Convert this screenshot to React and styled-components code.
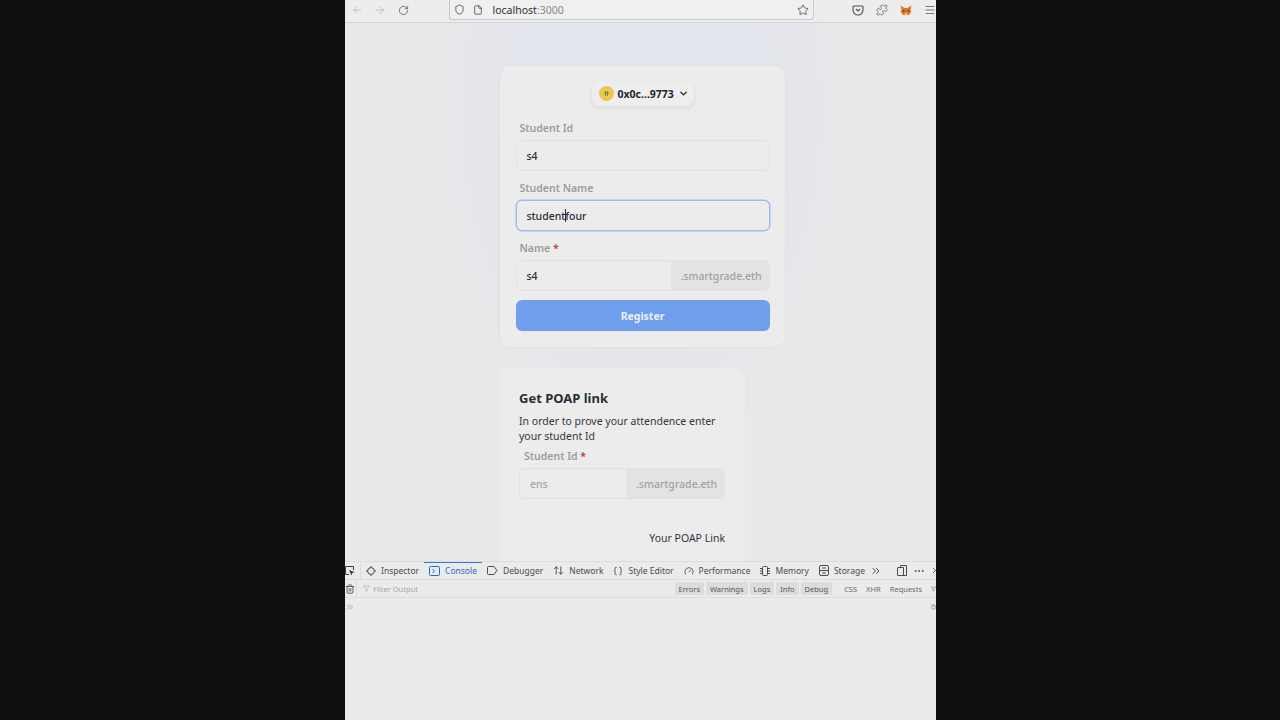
import React from 'react';
import styled, { createGlobalStyle } from 'styled-components';
import {
  ArrowLeft, ArrowRight, RotateCw, Shield, File, Star, Puzzle, Menu, ChevronDown,
  ArrowUpDown, Braces, Gauge, ChevronsRight, Ellipsis, X, Trash2, Filter,
} from 'lucide-react';

const GlobalStyle = createGlobalStyle`
  html, body { margin: 0; height: 100%; background: #0f0f0f; }
  body { font-family: "Noto Sans", "Open Sans", sans-serif; overflow: hidden; }
  * { box-sizing: border-box; }
`;

const Stage = styled.div`
  height: 720px;
  padding-left: 345px;
`;

const Win = styled.div`
  width: 591px;
  height: 720px;
  background: #ebebeb;
  display: flex;
  flex-direction: column;
  overflow: hidden;
`;

const Toolbar = styled.div`
  height: 23px;
  flex: none;
  background: #ededed;
  border-bottom: 1px solid #d4d4d4;
  display: flex;
  align-items: flex-start;
  color: #4a4a4a;
`;

const NavIcon = styled.span`
  width: 23.5px;
  height: 20px;
  display: flex;
  align-items: center;
  justify-content: center;
  color: ${p => (p.$dim ? '#b4b4b4' : '#4d4d4d')};
`;

const NavGroup = styled.div`
  display: flex;
  padding-left: ${p => p.$left || 0}px;
  gap: ${p => p.$gap || 0}px;
  align-items: center;
  height: 20px;
`;

const UrlBar = styled.div`
  width: 371px;
  height: 20px;
  margin-left: 33px;
  background: #f0f0f0;
  border: 1px solid #c9c9c9;
  border-top: none;
  border-radius: 0 0 3px 3px;
  display: flex;
  align-items: center;
  padding: 0 4px 0 4px;
  gap: 8px;
  font-size: 10.5px;
  color: #2f2f2f;
`;

const UrlText = styled.span`
  flex: 1;
  padding-left: 2px;
  span { color: #8a8a8a; }
`;

const Page = styled.div`
  height: 538px;
  flex: none;
  padding: 42px 0 0 154px;
  overflow: hidden;
  background:
    radial-gradient(ellipse 230px 360px at 297px 90px, #e2e5ee 0%, #e3e5ec 55%, rgba(233, 233, 233, 0) 100%),
    #e9e9e9;
`;

const Card = styled.div`
  width: 287px;
  padding: 15px 15.5px 16px;
  background: #ececec;
  border: 1px solid #e2e2e2;
  border-radius: 12px;
  display: flex;
  flex-direction: column;
`;

const WalletRow = styled.div`
  display: flex;
  justify-content: center;
  margin-bottom: 15px;
`;

const WalletButton = styled.div`
  width: 102px;
  height: 25px;
  border-radius: 8px;
  background: #eeeeee;
  box-shadow: 0 2px 5px rgba(0, 0, 0, 0.08);
  display: flex;
  align-items: center;
  padding-left: 7px;
  gap: 4px;
  font-size: 10.5px;
  font-weight: 700;
  color: #22252b;
  white-space: nowrap;
`;

const Avatar = styled.span`
  width: 15px;
  height: 15px;
  border-radius: 50%;
  background: #edc84f;
  display: flex;
  align-items: center;
  justify-content: center;
  flex: none;
`;

const Label = styled.div`
  font-size: 10.5px;
  font-weight: 600;
  line-height: 14px;
  color: #9a9ca1;
  padding-left: ${p => p.$indent || 4}px;
  margin-bottom: 5px;
  i { font-style: normal; color: #c0392b; }
`;

const InputBox = styled.div`
  height: 31px;
  display: flex;
  align-items: center;
  border: 1px solid ${p => (p.$focused ? '#9dbbec' : '#e2e2e2')};
  box-shadow: ${p => (p.$focused ? '0 0 0 0.5px #9dbbec' : 'none')};
  border-radius: 6px;
  padding-left: 10px;
  margin-bottom: ${p => p.$gap ?? 10}px;
  font-size: 10.5px;
  font-weight: 500;
  color: #2b2d33;
  background: #ececec;
  overflow: hidden;
`;

const Caret = styled.span`
  display: inline-block;
  width: 1px;
  height: 13px;
  margin: 0 -1px 0 0;
  background: #2b2d33;
  vertical-align: -2px;
`;

const GroupValue = styled.span`
  flex: 1;
  color: ${p => (p.$placeholder ? '#a3a5aa' : '#2b2d33')};
`;

const Addon = styled.span`
  width: ${p => p.$width || 98}px;
  height: 100%;
  background: #e3e3e3;
  color: #a0a2a7;
  display: flex;
  align-items: center;
  padding-left: 10px;
  white-space: nowrap;
`;

const SubmitButton = styled.div`
  height: 31px;
  border-radius: 6px;
  background: #6f9fec;
  color: #ecf0f6;
  font-size: 10.5px;
  font-weight: 700;
  display: flex;
  align-items: center;
  justify-content: center;
`;

const PoapCard = styled.div`
  width: 246px;
  height: 300px;
  margin-top: 20px;
  padding: 20px;
  background: #ececec;
  border-radius: 12px;
  display: flex;
  flex-direction: column;
`;

const PoapTitle = styled.h2`
  margin: 0 0 6px;
  font-size: 13px;
  line-height: 20px;
  font-weight: 700;
  color: #2a2d35;
`;

const PoapText = styled.p`
  margin: 0 0 5px;
  font-size: 10.5px;
  line-height: 15px;
  color: #33363d;
`;

const PoapResult = styled.div`
  margin-top: 32px;
  text-align: right;
  font-size: 10.5px;
  line-height: 15px;
  color: #33363d;
`;

const Devtools = styled.div`
  flex: 1;
  background: #ebebeb;
  display: flex;
  flex-direction: column;
  font-size: 8.5px;
  color: #4a4a4f;
`;

const TabBar = styled.div`
  height: 19px;
  border-top: 1px solid #dcdcdc;
  border-bottom: 1px solid #dcdcdc;
  display: flex;
  align-items: center;
  white-space: nowrap;
`;

const Tab = styled.div`
  height: 100%;
  display: flex;
  align-items: center;
  gap: 5px;
  padding: 0 5px;
  margin-right: ${p => p.$after ?? 0}px;
  color: ${p => (p.$active ? '#2b6cc4' : '#4a4a4f')};
  box-shadow: ${p => (p.$active ? 'inset 0 1px 0 #2b7de0' : 'none')};
`;

const TabEnd = styled.div`
  margin-left: auto;
  display: flex;
  align-items: center;
  gap: 6px;
  margin-right: -4px;
`;

const PickerCell = styled.div`
  width: 16px;
  height: 100%;
  display: flex;
  align-items: center;
  border-right: 1px solid #dcdcdc;
`;

const FilterBar = styled.div`
  height: 18px;
  border-bottom: 1px solid #dcdcdc;
  display: flex;
  align-items: center;
  font-size: 7.5px;
`;

const FilterInput = styled.div`
  flex: 1;
  display: flex;
  align-items: center;
  gap: 3px;
  padding-left: 6px;
  color: #a5a5a5;
  height: 100%;
  border-left: 1px solid #dcdcdc;
  margin-left: 1px;
`;

const Pill = styled.span`
  height: 13px;
  padding: 0 4px;
  border-radius: 2px;
  background: #dcdcdc;
  margin-right: 2px;
  display: flex;
  align-items: center;
  color: #55565a;
`;

const PlainFilter = styled.span`
  margin-left: ${p => p.$left || 0}px;
  color: #6a6a6a;
`;

const Prompt = styled.div`
  height: 17px;
  display: flex;
  align-items: center;
  justify-content: space-between;
  color: #9a9a9a;
  padding-right: 0;
`;

const BottomIcon = styled.span`
  display: flex;
  width: 5px;
  overflow: hidden;
  color: #555;
`;

const Pocket = () => (
  <svg width="12" height="12" viewBox="0 0 12 12" fill="none" stroke="#4d4d4d" strokeWidth="1.1">
    <path d="M2 2h8a1 1 0 0 1 1 1v3a5 5 0 0 1-10 0V3a1 1 0 0 1 1-1z" />
    <path d="M4 5l2 2 2-2" />
  </svg>
);

const Fox = () => (
  <svg width="12" height="11" viewBox="0 0 12 11">
    <path d="M0.5 0.5l4 2.5h3l4-2.5-1 4 .8 2.5-2.3 3H3L.7 7l.8-2.5z" fill="#e2761b" />
    <path d="M3 4.5l2 1.5-2 .8zM9 4.5L7 6l2 .8z" fill="#5c3b1e" />
    <path d="M4.5 8h3l-.5 2H5z" fill="#d7c1b3" />
  </svg>
);

const InspectorIcon = () => (
  <svg width="10" height="10" viewBox="0 0 10 10" fill="none" stroke="#4a4a4f" strokeWidth="1">
    <circle cx="5" cy="5" r="3.4" />
    <path d="M5 0v1.6M5 8.4V10M0 5h1.6M8.4 5H10" />
  </svg>
);

const ConsoleIcon = () => (
  <svg width="11" height="10" viewBox="0 0 11 10" fill="none" stroke="#2b6cc4" strokeWidth="1">
    <rect x="0.5" y="0.5" width="10" height="9" rx="1" />
    <path d="M3.5 3l2 2-2 2" />
  </svg>
);

const DebuggerIcon = () => (
  <svg width="11" height="9" viewBox="0 0 11 9" fill="none" stroke="#4a4a4f" strokeWidth="1">
    <path d="M1.5.5h5.5l3 4-3 4H1.500a1 1 0 0 1-1-1v-6a1 1 0 0 1 1-1z" />
  </svg>
);

const MemoryIcon = () => (
  <svg width="10" height="10" viewBox="0 0 10 10" fill="none" stroke="#4a4a4f" strokeWidth="1">
    <rect x="2.500" y="0.500" width="5" height="9" rx="1" />
    <path d="M0 2.500h2M0 5h2M0 7.500h2M8 2.500h2M8 5h2M8 7.500h2" />
  </svg>
);

const StorageIcon = () => (
  <svg width="10" height="11" viewBox="0 0 10 11" fill="none" stroke="#4a4a4f" strokeWidth="1">
    <rect x="0.500" y="0.500" width="9" height="10" rx="1.500" />
    <path d="M0.500 5.500h9M3 3h4M3 8h4" />
  </svg>
);

const DockIcon = () => (
  <svg width="10" height="11" viewBox="0 0 10 11" fill="none" stroke="#4a4a4f" strokeWidth="1">
    <path d="M3.500 2.500V1a.5.5 0 0 1 .5-.5h5.500v10H1a.5.5 0 0 1-.5-.5V3a.5.5 0 0 1 .5-.5h5.500v8" />
  </svg>
);

const PickerIcon = () => (
  <svg width="10" height="10" viewBox="0 0 10 10" fill="none" stroke="#3a3a3a" strokeWidth="1">
    <path d="M4 8.500H1a.5.5 0 0 1-.5-.5V1A.5.5 0 0 1 1 .5h7.500V4" />
    <path d="M4 4l5.500 2-2.200 1L6.500 9.500z" fill="#3a3a3a" stroke="none" />
  </svg>
);

const AvatarMark = () => (
  <svg width="7" height="7" viewBox="0 0 7 7" stroke="#6e8a4a" strokeWidth="1">
    <path d="M2.500 1v5M4.500 1v5M1 3h5" />
  </svg>
);

export default function App() {
  return (
    <Stage>
      <GlobalStyle />
      <Win>
        <Toolbar>
          <NavGroup $left={-2}>
            <NavIcon $dim><ArrowLeft size={12} strokeWidth={1.5} /></NavIcon>
            <NavIcon $dim><ArrowRight size={12} strokeWidth={1.5} /></NavIcon>
            <NavIcon><RotateCw size={11} strokeWidth={1.6} /></NavIcon>
          </NavGroup>
          <UrlBar>
            <Shield size={11} strokeWidth={1.5} />
            <File size={10} strokeWidth={1.6} />
            <UrlText>localhost<span>:3000</span></UrlText>
            <Star size={12} strokeWidth={1.4} />
          </UrlBar>
          <NavGroup $left={38} $gap={12}>
            <Pocket />
            <Puzzle size={12} strokeWidth={1.3} />
            <Fox />
            <Menu size={12} strokeWidth={1.4} />
          </NavGroup>
        </Toolbar>

        <Page>
          <Card>
            <WalletRow>
              <WalletButton>
                <Avatar><AvatarMark /></Avatar>
                0x0c...9773
                <ChevronDown size={11} strokeWidth={3} />
              </WalletButton>
            </WalletRow>
            <Label>Student Id</Label>
            <InputBox>s4</InputBox>
            <Label>Student Name</Label>
            <InputBox $focused>
              <span>student<Caret />four</span>
            </InputBox>
            <Label>Name <i>*</i></Label>
            <InputBox $gap={9} style={{ paddingRight: 0 }}>
              <GroupValue>s4</GroupValue>
              <Addon>.smartgrade.eth</Addon>
            </InputBox>
            <SubmitButton>Register</SubmitButton>
          </Card>

          <PoapCard>
            <PoapTitle>Get POAP link</PoapTitle>
            <PoapText>In order to prove your attendence enter your student Id</PoapText>
            <Label $indent={5}>Student Id <i>*</i></Label>
            <InputBox $gap={0}>
              <GroupValue $placeholder>ens</GroupValue>
              <Addon>.smartgrade.eth</Addon>
            </InputBox>
            <PoapResult>Your POAP Link</PoapResult>
          </PoapCard>
        </Page>

        <Devtools>
          <TabBar>
            <PickerCell><PickerIcon /></PickerCell>
            <Tab><InspectorIcon />Inspector</Tab>
            <Tab $active><ConsoleIcon />Console</Tab>
            <Tab><DebuggerIcon />Debugger</Tab>
            <Tab><ArrowUpDown size={11} />Network</Tab>
            <Tab><Braces size={10} />Style Editor</Tab>
            <Tab><Gauge size={10} />Performance</Tab>
            <Tab><MemoryIcon />Memory</Tab>
            <Tab><StorageIcon />Storage</Tab>
            <ChevronsRight size={12} />
            <TabEnd>
              <DockIcon />
              <Ellipsis size={12} />
              <X size={9} />
            </TabEnd>
          </TabBar>
          <FilterBar>
            <Trash2 size={10} />
            <FilterInput>
              <Filter size={7} />
              Filter Output
            </FilterInput>
            <Pill>Errors</Pill>
            <Pill>Warnings</Pill>
            <Pill>Logs</Pill>
            <Pill>Info</Pill>
            <Pill>Debug</Pill>
            <PlainFilter $left={10}>CSS</PlainFilter>
            <PlainFilter $left={9}>XHR</PlainFilter>
            <PlainFilter $left={9}>Requests</PlainFilter>
            <PlainFilter $left={9}><BottomIcon><Filter size={8} /></BottomIcon></PlainFilter>
          </FilterBar>
          <Prompt>
            <ChevronsRight size={10} />
            <BottomIcon><File size={10} /></BottomIcon>
          </Prompt>
        </Devtools>
      </Win>
    </Stage>
  );
}
